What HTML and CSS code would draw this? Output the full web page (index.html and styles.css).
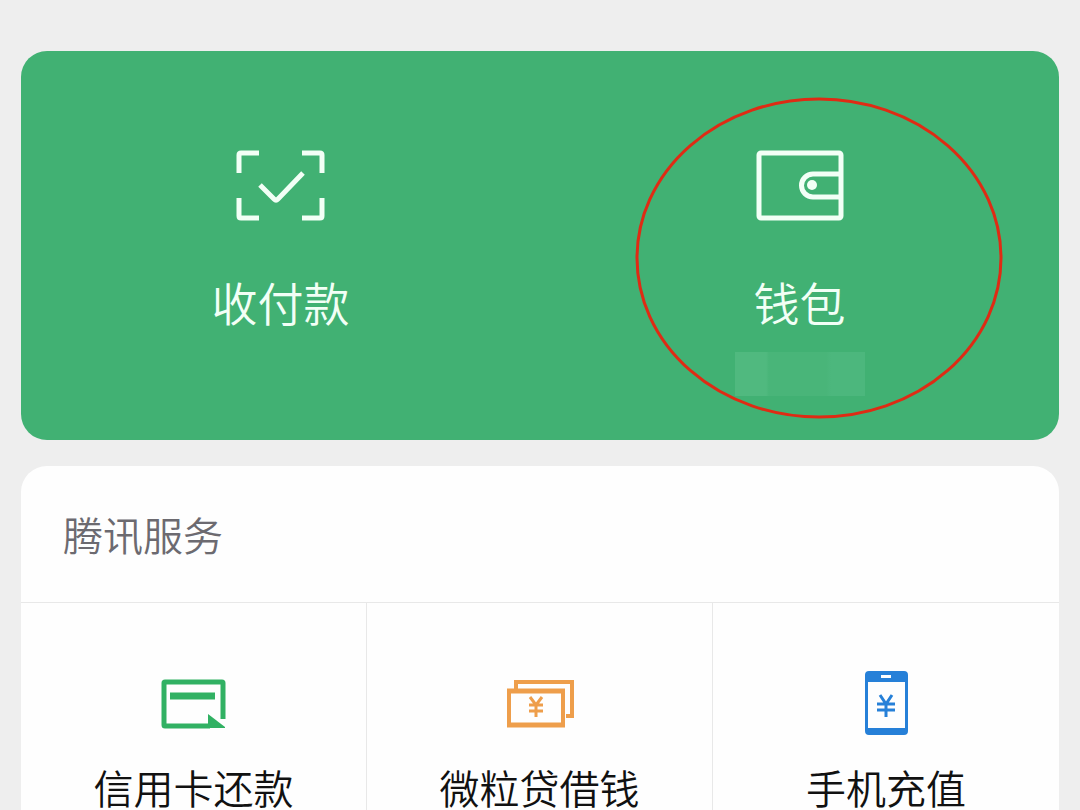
FILE: index.html
```html
<!DOCTYPE html>
<html lang="zh-CN">
<head>
    <meta charset="UTF-8">
    <meta name="viewport" content="width=device-width, initial-scale=1.0">
    <title>支付</title>
    <link rel="stylesheet" href="styles.css">
</head>
<body>
    <div class="pay-card">
        <a class="pay-item" href="#pay">
            <svg class="pay-icon" viewBox="0 0 90 72" fill="none" stroke="#f2fff6" stroke-width="5">
                <path d="M3 24V6Q3 4 5 4H23M66 4H84Q86 4 86 6V24M86 49V67Q86 69 84 69H66M23 69H5Q3 69 3 67V49"/>
                <path d="M24 36L38 50Q40 52 42 50L67 24"/>
            </svg>
            <span class="pay-label">收付款</span>
        </a>
        <a class="pay-item" href="#wallet">
            <svg class="pay-icon" viewBox="0 0 90 72" fill="none" stroke="#f2fff6" stroke-width="5">
                <rect x="4" y="4" width="82" height="65" rx="2"/>
                <path d="M85 25H58A11 11 0 0 0 58 48H85"/>
                <circle cx="57" cy="36" r="5" fill="#f2fff6" stroke="none"/>
            </svg>
            <span class="pay-label">钱包</span>
            <span class="balance"></span>
            <svg class="mark" viewBox="0 0 368 322" fill="none">
                <ellipse cx="184" cy="161" rx="182" ry="159" stroke="#df2b14" stroke-width="3"/>
            </svg>
        </a>
    </div>

    <div class="services">
        <h2 class="services-title">腾讯服务</h2>
        <div class="services-grid">
            <a class="service" href="#credit">
                <svg class="service-icon" viewBox="0 0 72 72" fill="none" stroke="#31b163" stroke-width="5">
                    <path d="M52 59H7Q6 59 6 58V16Q6 15 7 15H64Q65 15 65 16V52"/>
                    <path d="M12 29H57" stroke-width="7"/>
                    <path d="M50 47L67 60V61H50Z" fill="#31b163" stroke="none"/>
                </svg>
                <span>信用卡还款</span>
            </a>
            <a class="service" href="#loan">
                <svg class="service-icon" viewBox="0 0 72 72" fill="none" stroke="#ee9e4b" stroke-width="4">
                    <path d="M12 22V15H68V49H62"/>
                    <path d="M3 24H61M3 58H61" stroke-width="5"/>
                    <path d="M5 24V58M59 24V58"/>
                    <path d="M26 30L32 38L38 30M32 38V50M25 38H39M25 44H39" stroke-width="3"/>
                </svg>
                <span>微粒贷借钱</span>
            </a>
            <a class="service" href="#topup">
                <svg class="service-icon" viewBox="0 0 72 72" fill="none">
                    <path fill="#2680d8" fill-rule="evenodd" d="M19 4H54Q58 4 58 8V64Q58 68 54 68H19Q15 68 15 64V8Q15 4 19 4ZM18 15V61H55V15ZM31 8V11H41V8Z"/>
                    <path d="M30 28L36 37L42 28M36 37V50M27 37H45M27 43H45" stroke="#2680d8" stroke-width="3"/>
                </svg>
                <span>手机充值</span>
            </a>
        </div>
    </div>
</body>
</html>
```
FILE: styles.css
```css
* {
    box-sizing: border-box;
}

body {
    display: flex;
    flex-direction: column;
    min-height: 100vh;
    margin: 0;
    padding: 51px 21px 0;
    background-color: #eeeeee;
    font-family: "Noto Sans CJK SC", sans-serif;
    font-weight: 350;
}

a {
    color: inherit;
    text-decoration: none;
}

.pay-card {
    display: flex;
    background-color: #41b173;
    border-radius: 26px;
}

.pay-item {
    position: relative;
    flex: 1;
    display: flex;
    flex-direction: column;
    align-items: center;
    padding: 98px 0 44px;
    color: #f2fff6;
}

.pay-icon {
    width: 90px;
    height: 72px;
}

.pay-label {
    margin-top: 52px;
    font-size: 46px;
    line-height: 56px;
}

.balance {
    width: 130px;
    height: 44px;
    margin-top: 23px;
    background: linear-gradient(to right, #50b97f 0 24%, #49b579 26% 70%, #4cb77d 74%);
}

/* red circle around the wallet entry */
.mark {
    position: absolute;
    top: 46px;
    right: 56px;
    width: 368px;
    height: 322px;
}

.services {
    flex: 1;
    margin-top: 26px;
    display: flex;
    flex-direction: column;
    background-color: #fefefe;
    border-radius: 26px 26px 0 0;
}

.services-title {
    margin: 0;
    padding: 40px 42px;
    border-bottom: 1px solid #e8e8e8;
    color: #6c6a70;
    font-size: 40px;
    font-weight: 350;
    line-height: 56px;
}

.services-grid {
    flex: 1;
    display: grid;
    grid-template-columns: repeat(3, 1fr);
}

.service {
    display: flex;
    flex-direction: column;
    align-items: center;
    gap: 28px;
    padding-top: 64px;
    border-right: 1px solid #e8e8e8;
    color: #111111;
    font-size: 40px;
    line-height: 40px;
}

.service:last-child {
    border-right: none;
}

.service-icon {
    width: 72px;
    height: 72px;
}
```
